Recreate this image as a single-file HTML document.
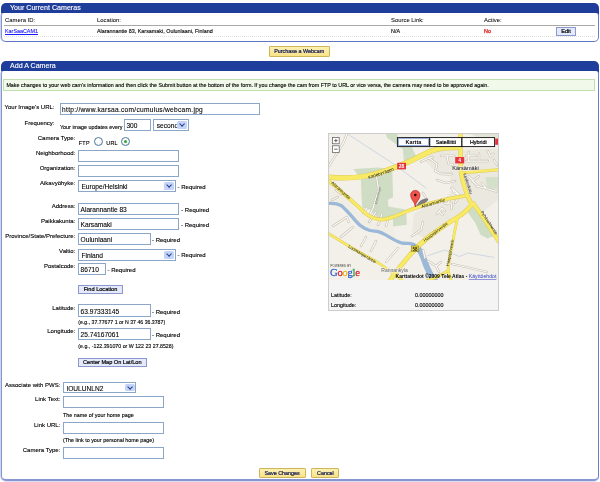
<!DOCTYPE html>
<html><head><meta charset="utf-8"><title>Webcam</title>
<style>
html,body{margin:0;padding:0;background:#fff;}
body{width:600px;height:482px;position:relative;overflow:hidden;will-change:transform;font-family:"Liberation Sans",sans-serif;font-size:5.4px;color:#000;line-height:1;-webkit-text-stroke:0.12px #000;}
.a{position:absolute;white-space:nowrap;}
.box{position:absolute;left:1px;width:598px;}
.box .hb{position:absolute;left:0;right:0;top:0;height:14px;background:#1f3d9b;border-radius:5px 5px 0 0;}
.box .in{position:absolute;left:0;right:0;bottom:0;box-sizing:border-box;background:#fff;border-left:1px solid #8595d1;border-right:1px solid #6a7ec8;border-bottom:1px solid #5f76c2;border-radius:3px 3px 5px 5px;box-shadow:-1px 0 0 #cfd5ec;}
.hd{position:absolute;left:9px;top:2.3px;color:#fff;font-size:7.1px;white-space:nowrap;-webkit-text-stroke:0.12px #fff;}
.lbl{position:absolute;white-space:nowrap;text-align:right;width:110px;color:#000;font-size:6px;}
.inp{position:absolute;background:#fff;border:1px solid #8ba6c6;box-sizing:border-box;height:12px;font-size:6.6px;line-height:9.4px;padding-left:1.6px;padding-top:1.2px;white-space:nowrap;overflow:hidden;-webkit-text-stroke:0.1px #000;}
.sel{position:absolute;background:#fff;border:1px solid #8ba6c6;box-sizing:border-box;height:12px;font-size:6.6px;line-height:9.4px;padding-left:2.4px;padding-top:.8px;white-space:nowrap;overflow:hidden;-webkit-text-stroke:0.1px #000;}
.sel i{position:absolute;right:0.8px;top:1px;width:9.6px;height:8px;background:#c3d3fa;border-radius:1.5px;}
.sel i:after{content:"";position:absolute;left:2.5px;top:.7px;width:3.2px;height:3.2px;border-right:1.5px solid #27407f;border-bottom:1.5px solid #27407f;transform:rotate(45deg);}
.req{position:absolute;white-space:nowrap;color:#000;font-size:6px;}
.hint{position:absolute;white-space:nowrap;color:#000;font-size:5.4px;}
.btn{position:absolute;box-sizing:border-box;border:1px solid #8c98cc;background:#e4eafb;text-align:center;white-space:nowrap;color:#000;font-size:5.6px;-webkit-text-stroke:0.2px #000;}
.ybtn{position:absolute;box-sizing:border-box;border:1px solid #cdb658;background:linear-gradient(#fcf0b4,#f8e388);text-align:center;white-space:nowrap;color:#141a55;font-size:5.4px;-webkit-text-stroke:0.22px #141a55;border-radius:1px;}
.radio{position:absolute;width:9px;height:9px;box-sizing:border-box;border:1.1px solid #4d78a6;border-radius:50%;background:radial-gradient(circle at 40% 35%,#fff 30%,#e4e4dc 100%);}
.radio span{position:absolute;left:2px;top:2px;width:3px;height:3px;border-radius:50%;background:#2fa62f;}
</style></head><body>

<!-- box 1 -->
<div class="box" style="top:3px;height:39px;"><div class="hb"></div><div class="in" style="top:9.8px;"></div><div class="hd">Your Current Cameras</div></div>
<div class="a" style="left:5px;top:18.2px;font-size:5.9px;-webkit-text-stroke:0.04px #000;">Camera ID:</div>
<div class="a" style="left:97px;top:18.2px;font-size:5.9px;-webkit-text-stroke:0.04px #000;">Location:</div>
<div class="a" style="left:391px;top:18.2px;font-size:5.9px;-webkit-text-stroke:0.04px #000;">Source Link:</div>
<div class="a" style="left:484px;top:18.2px;font-size:5.9px;-webkit-text-stroke:0.04px #000;">Active:</div>
<div class="a" style="left:4px;top:25px;width:591px;height:1px;background:#a8a8a4;"></div>
<div class="a" style="left:5px;top:28.6px;color:#1a1aff;text-decoration:underline;-webkit-text-stroke:0.12px #1a1aff;">KarSaaCAM1</div>
<div class="a" style="left:97px;top:28.6px;">Alarannantie 83, Karsamaki, Oulunlaani, Finland</div>
<div class="a" style="left:391px;top:28.6px;">N/A</div>
<div class="a" style="left:484px;top:28.6px;color:#e01010;-webkit-text-stroke:0.25px #e01010;">No</div>
<div class="btn" style="left:556px;top:27px;width:20px;height:8.5px;line-height:6.5px;">Edit</div>
<div class="a" style="left:4px;top:36px;width:591px;height:0;border-top:1px dotted #e0e0e0;"></div>

<div class="ybtn" style="left:268.6px;top:46px;width:61.2px;height:10.6px;line-height:8.6px;">Purchase a Webcam</div>

<!-- box 2 -->
<div class="box" style="top:61px;height:420px;"><div class="hb"></div><div class="in" style="top:9.8px;border-bottom:2px solid #8796d2;box-shadow:-1px 0 0 #cfd5ec,0 1px 0 #d9def2;"></div><div class="hd">Add A Camera</div></div>
<div class="a" style="left:3.4px;top:79px;width:591.4px;height:11.6px;box-sizing:border-box;border:1px solid #bfdfae;background:#f1f9ea;line-height:10.8px;padding-left:2px;font-size:5.36px;">Make changes to your web cam's information and then click the Submit button at the bottom of the form. If you change the cam from FTP to URL or vice versa, the camera may need to be approved again.</div>


<!-- form -->
<div class="lbl" style="left:-55.5px;top:104.3px;">Your Image's URL:</div>
<div class="inp" style="left:59.5px;top:103.2px;width:200.0px;letter-spacing:.28px;">http://www.karsaa.com/cumulus/webcam.jpg</div>
<div class="lbl" style="left:-55.5px;top:119.8px;">Frequency:</div>
<div class="hint" style="left:60.0px;top:124.5px;">Your image updates every</div>
<div class="inp" style="left:123.8px;top:119.0px;width:27.6px;height:12.4px;">300</div>
<div class="sel" style="left:153.4px;top:119.4px;width:35.3px;height:11.4px;line-height:9px;">seconds<i style="height:7.4px;"></i></div>
<div class="lbl" style="left:-34.7px;top:134.8px;">Camera Type:</div>
<div class="hint" style="left:78.8px;top:141px;letter-spacing:.25px;">FTP</div>
<div class="radio" style="left:93.5px;top:137.2px;"></div>
<div class="hint" style="left:106.3px;top:141px;letter-spacing:.25px;">URL</div>
<div class="radio" style="left:121px;top:137.2px;"><span></span></div>
<div class="lbl" style="left:-34.7px;top:150.1px;">Neighborhood:</div>
<div class="inp" style="left:78.0px;top:149.6px;width:101.0px;"></div>
<div class="lbl" style="left:-34.7px;top:165.1px;">Organization:</div>
<div class="inp" style="left:78.0px;top:164.8px;width:101.0px;"></div>
<div class="lbl" style="left:-34.7px;top:180.1px;">Aikavyöhyke:</div>
<div class="sel" style="left:78.0px;top:180.0px;width:97.6px;">Europe/Helsinki<i></i></div>
<div class="req" style="left:177.6px;top:183.8px;">- Required</div>
<div class="lbl" style="left:-34.7px;top:203.1px;">Address:</div>
<div class="inp" style="left:78.0px;top:203.0px;width:101.0px;">Alarannantie 83</div>
<div class="req" style="left:181.2px;top:206.6px;">- Required</div>
<div class="lbl" style="left:-34.7px;top:218.1px;">Paikkakunta:</div>
<div class="inp" style="left:78.0px;top:218.0px;width:101.0px;">Karsamaki</div>
<div class="req" style="left:181.0px;top:222.3px;">- Required</div>
<div class="lbl" style="left:-34.7px;top:233.1px;">Province/State/Prefecture:</div>
<div class="inp" style="left:78.0px;top:233.0px;width:72.8px;">Oulunlaani</div>
<div class="req" style="left:152.0px;top:237.3px;">- Required</div>
<div class="lbl" style="left:-34.7px;top:248.1px;">Valtio:</div>
<div class="sel" style="left:78.0px;top:249.0px;width:97.6px;">Finland<i></i></div>
<div class="req" style="left:177.6px;top:252.1px;">- Required</div>
<div class="lbl" style="left:-34.7px;top:263.3px;">Postalcode:</div>
<div class="inp" style="left:78.0px;top:263.0px;width:28.0px;">86710</div>
<div class="req" style="left:107.5px;top:266.8px;">- Required</div>
<div class="btn" style="left:78px;top:285px;width:45px;height:9.4px;line-height:7.4px;">Find Location</div>
<div class="lbl" style="left:-34.7px;top:304.8px;">Latitude:</div>
<div class="inp" style="left:78.0px;top:304.4px;width:73.0px;height:12.6px;">63.97333145</div>
<div class="req" style="left:152.0px;top:308.8px;">- Required</div>
<div class="hint" style="left:78.3px;top:320.2px;font-size:5.2px;">(e.g., 37.77677 1 or N 37 46 36.3787)</div>
<div class="lbl" style="left:-34.7px;top:328.3px;">Longitude:</div>
<div class="inp" style="left:78.0px;top:328.0px;width:73.0px;">25.74167061</div>
<div class="req" style="left:152.0px;top:332.3px;">- Required</div>
<div class="hint" style="left:78.3px;top:343.8px;font-size:5.25px;">(e.g., -122.391070 or W 122 23 27.8528)</div>
<div class="btn" style="left:78px;top:357.6px;width:68.6px;height:9.4px;line-height:7.4px;">Center Map On Lat/Lon</div>
<div class="lbl" style="left:-49.7px;top:382.3px;">Associate with PWS:</div>
<div class="sel" style="left:63px;top:382.4px;width:73.4px;height:11px;line-height:9px;">IOULUNLN2<i style="height:7px;"></i></div>
<div class="lbl" style="left:-49.7px;top:396.2px;">Link Text:</div>
<div class="inp" style="left:63.0px;top:396.0px;width:100.6px;"></div>
<div class="hint" style="left:63.0px;top:412.6px;">The name of your home page</div>
<div class="lbl" style="left:-49.7px;top:422.4px;">Link URL:</div>
<div class="inp" style="left:63.0px;top:422.0px;width:100.6px;"></div>
<div class="hint" style="left:63.0px;top:438.2px;">(The link to your personal home page)</div>
<div class="lbl" style="left:-49.7px;top:447.4px;">Camera Type:</div>
<div class="inp" style="left:63.0px;top:447.2px;width:100.6px;"></div>

<div class="ybtn" style="left:258.6px;top:467.6px;width:47px;height:10px;line-height:8px;">Save Changes</div>
<div class="ybtn" style="left:311.4px;top:467.6px;width:28px;height:10px;line-height:8px;">Cancel</div>

<!-- map panel -->
<div class="a" style="left:328px;top:133px;width:171.3px;height:178px;box-sizing:border-box;border:1px solid #ccc;background:#f4f4f4;"></div>
<div class="a" style="left:331px;top:293.3px;">Latitude:</div>
<div class="a" style="left:415px;top:293.3px;">0.00000000</div>
<div class="a" style="left:331px;top:302.8px;">Longitude:</div>
<div class="a" style="left:415px;top:302.8px;">0.00000000</div>

<svg class="a" style="left:329px;top:134px;" width="169" height="146" viewBox="329 134 169 146" font-family="Liberation Sans, sans-serif">
<rect x="329" y="134" width="169" height="146" fill="#f3f0e9"/>
<path d="M424,160 L436,150 L498,149 L498,200 L480,214 L474,208 L462,216 L440,228 L424,238 L412,232 L414,214 L430,204 L446,198 L452,190 L450,177 L436,172 Z" fill="#ebe8df"/>
<path d="M329,183 L346,196 L358,212 L372,222 L392,222 L396,238 L380,234 L362,226 L348,212 L340,204 L329,203 Z" fill="#f0ede5"/>
<g fill="#cfddc4">
<path d="M386,134 L397.2,134 L398,139.6 L403.7,142.4 L411,145.2 L416.8,157.6 L404,162 L402.8,149 L392.5,141.5 L387,137.7 Z"/>
<path d="M353.3,169.1 L378.2,167.5 L392.3,169.6 L393.1,197.3 L387.8,199.8 L388.5,206.5 L399.8,208.5 L406.4,209.8 L406.7,224.7 L393.1,226.4 L392.8,217.3 L384.8,218.9 L378.2,218.1 L369.9,209.8 L362.4,208.1 L361.6,198.2 L360.8,179.1 Z"/>
<path d="M466.5,210.6 L472,206.6 L481,214.5 L494,231.5 L494,236 L487.6,238.5 L480.6,235 L475.3,223 Z"/>
<path d="M485.5,177 L498,177 L498,189 L487,188.5 Z" opacity=".8"/>
<path d="M470,134 L498,134 L498,141 L482,139.5 Z" opacity=".55"/>
</g>
<g fill="none" stroke="#9cb8d8" stroke-linecap="round" stroke-linejoin="round">
<path d="M327,203.6 C332,203 337,203.4 341,205.4 C345,208.4 348.6,213 353.3,218.1 C356,221.4 358.6,224.4 361.6,226.4 C364.4,228.6 367,229.8 369.9,230.5 C373,231.2 375.6,231 378.2,231.6 C382,232.6 385,234.6 388.2,236.3 C392,238.6 396,241 401,242.8 C405,243.6 408,243.2 411,243.6 C415,244.4 418.6,247.6 421,251.4 C424.4,256.6 425.5,263 428,268 C430.5,273.5 434,278 437.5,282" stroke-width="3.3"/>
<path d="M419,249.5 C423,254.5 424.4,261 426.6,266.5 L432.5,279" stroke-width="6"/>
<path d="M347.7,134 L390.6,162 L414,179 L426,188" stroke-width=".6" stroke="#b3c6db"/>
<path d="M428,255.6 L445,250 L459.4,256.5 L468,253 L494,257.4" stroke-width=".6" stroke="#b3c6db"/>
<path d="M329,164 L334,158" stroke-width=".6" stroke="#b3c6db"/>
</g>
<path d="M346.7,134 C345,142 340,149 335,156 L329,166 M376.6,177 L378.5,190 L373,208 L369,216 M333,226 L347,217 L348.5,222 M341,237 L353,227 M361,246 L366,237 M371,251 L376,241 M386,262 L398,248 M363,213 L367,208 M369,222 L376,212 M378,225 L382,214 M386,226 L389,217 M336,190 L341,194 M332,200 L338,197 M412,236 L421,230 L423,222 M423,250 L425,258 M428,261 L436,266 L441,262 M436,266 L439,272 M452,264 L470,268 L487,272 M437,214 L442,208 L445,211 M447,204 L450,200 M455,203 L458,198 M421,161.7 L429,158 L432.5,157.3 M429,158 L436.9,163.9 L435.4,171.1 L441.2,174 L451.4,174 M441.2,155.9 L454.3,155.9 M447,155.9 L448.5,163.9 L452.8,164.6 M437,180 L446,183 L455,181 M466,155.9 L476,155.9 M468.8,152.3 L468.8,161 M479,153.7 L479,159.5 M466,161 L487.7,161 M487.7,150.8 L490.6,156.6 L493.5,153.7 M494,160 L497,165 M468.8,176 L477.5,186.4 L486.2,188.5 L496.4,191.4 M481.9,183.5 L486.2,188.5 M472,181 L478.9,176.2 M452.1,188 L454.3,193 L459,195 M451.4,187.8 L458.6,194.3 M444,203.1 L451.4,203.1 L451.4,208.9 M439.8,211.8 L442.7,215 M423,193 L426,198 " fill="none" stroke="#c2bcaf" stroke-width="2.3" stroke-linecap="round" stroke-linejoin="round"/>
<path d="M346.7,134 C345,142 340,149 335,156 L329,166 M376.6,177 L378.5,190 L373,208 L369,216 M333,226 L347,217 L348.5,222 M341,237 L353,227 M361,246 L366,237 M371,251 L376,241 M386,262 L398,248 M363,213 L367,208 M369,222 L376,212 M378,225 L382,214 M386,226 L389,217 M336,190 L341,194 M332,200 L338,197 M412,236 L421,230 L423,222 M423,250 L425,258 M428,261 L436,266 L441,262 M436,266 L439,272 M452,264 L470,268 L487,272 M437,214 L442,208 L445,211 M447,204 L450,200 M455,203 L458,198 M421,161.7 L429,158 L432.5,157.3 M429,158 L436.9,163.9 L435.4,171.1 L441.2,174 L451.4,174 M441.2,155.9 L454.3,155.9 M447,155.9 L448.5,163.9 L452.8,164.6 M437,180 L446,183 L455,181 M466,155.9 L476,155.9 M468.8,152.3 L468.8,161 M479,153.7 L479,159.5 M466,161 L487.7,161 M487.7,150.8 L490.6,156.6 L493.5,153.7 M494,160 L497,165 M468.8,176 L477.5,186.4 L486.2,188.5 L496.4,191.4 M481.9,183.5 L486.2,188.5 M472,181 L478.9,176.2 M452.1,188 L454.3,193 L459,195 M451.4,187.8 L458.6,194.3 M444,203.1 L451.4,203.1 L451.4,208.9 M439.8,211.8 L442.7,215 M423,193 L426,198 " fill="none" stroke="#fbfaf5" stroke-width="1.25" stroke-linecap="round" stroke-linejoin="round"/>
<g fill="none" stroke="#dcc856" stroke-linecap="round" stroke-linejoin="round">
<path d="M327,177 C340,178.6 354,178 366,176 C380,173.3 394,168 406,163 C416,158.7 424,154 432,150.8 C440,148 450,147.4 459,147.4" stroke-width="5.3"/>
<path d="M460.5,132 L460.5,160 L461,172 C462,180 465,189 468,197 L472,205" stroke-width="4.3"/>
<path d="M327,180.4 C334,184.5 340,189.6 345,194.9 C350,198.6 356,204.5 361.6,209.8 C365,213.5 368,215.6 371.6,217.3 C375,218.8 378,219.6 381.5,219.6 C386,219.4 390,218 394.8,216.4 C401,214 406,211.6 411.4,209.6 C418,207 424,205 430,203.4 C440,200.6 452,197.6 468,195.4" stroke-width="3.7"/>
<path d="M472,204 C467,211 461,215.5 455,219 C446,224 438,230 430,236 C422,242 415,249 409,256 C402,264 395,273 389,282" stroke-width="4.7"/>
<path d="M473,203 C479,211 486,221.5 492,231 L500,243" stroke-width="4.3"/>
<path d="M327,232.6 C336,238 344,243 352,248 C362,254 372,258.5 380,264 C388,269.5 396,275 403,281" stroke-width="2.7"/>
<path d="M457.5,218 C455.5,227 453.5,237 452,246 C450.5,254 448.4,262 448.2,269 C448.4,274 450,278 452,282" stroke-width="2.7"/>
<path d="M462,173 C470,172 480,171.2 490,170.4 L500,169.6" stroke-width="3.0"/>
<path d="M424,282 L436,277.5 L448.5,270.5" stroke-width="2.7"/>
</g>
<g fill="none" stroke="#f8ea64" stroke-linecap="round" stroke-linejoin="round">
<path d="M327,177 C340,178.6 354,178 366,176 C380,173.3 394,168 406,163 C416,158.7 424,154 432,150.8 C440,148 450,147.4 459,147.4" stroke-width="4.4"/>
<path d="M460.5,132 L460.5,160 L461,172 C462,180 465,189 468,197 L472,205" stroke-width="3.4"/>
<path d="M327,180.4 C334,184.5 340,189.6 345,194.9 C350,198.6 356,204.5 361.6,209.8 C365,213.5 368,215.6 371.6,217.3 C375,218.8 378,219.6 381.5,219.6 C386,219.4 390,218 394.8,216.4 C401,214 406,211.6 411.4,209.6 C418,207 424,205 430,203.4 C440,200.6 452,197.6 468,195.4" stroke-width="2.9"/>
<path d="M472,204 C467,211 461,215.5 455,219 C446,224 438,230 430,236 C422,242 415,249 409,256 C402,264 395,273 389,282" stroke-width="3.8"/>
<path d="M473,203 C479,211 486,221.5 492,231 L500,243" stroke-width="3.4"/>
<path d="M327,232.6 C336,238 344,243 352,248 C362,254 372,258.5 380,264 C388,269.5 396,275 403,281" stroke-width="2.0"/>
<path d="M457.5,218 C455.5,227 453.5,237 452,246 C450.5,254 448.4,262 448.2,269 C448.4,274 450,278 452,282" stroke-width="2.0"/>
<path d="M462,173 C470,172 480,171.2 490,170.4 L500,169.6" stroke-width="2.3"/>
<path d="M424,282 L436,277.5 L448.5,270.5" stroke-width="2.0"/>
</g>
<g font-size="4.4" fill="#222" text-anchor="middle">
<text x="381.5" y="174.6" transform="rotate(-19 381.5 174.6)">Karlebyvägen</text>
<text x="340" y="191.5" transform="rotate(42 340 191.5)">Alarannantie</text>
<text x="433.5" y="204.6" transform="rotate(-17 433.5 204.6)">Alarannantie</text>
<text x="361.5" y="255.4" transform="rotate(31 361.5 255.4)">Luomanperäntie</text>
<text x="436.5" y="233" transform="rotate(-37 436.5 233)">Haapajärventie</text>
<text x="451.3" y="253" transform="rotate(-79 451.3 253)" font-size="4">Haapajärventie</text>
<text x="466.6" y="184" transform="rotate(72 466.6 184)" font-size="4.2">Keskuskatu</text>
<text x="488" y="223.5" transform="rotate(57 488 223.5)" font-size="4.2">Pyhäsalmentie</text>
</g>
<g font-size="3.6" fill="#777" text-anchor="middle">
<text x="379" y="196" transform="rotate(-76 379 196)">Museokuja</text>
</g>
<text x="465.5" y="169.8" font-size="5.6" fill="#000" text-anchor="middle" stroke="#f6f4ee" stroke-width=".9" paint-order="stroke" stroke-linejoin="round">Kärsämäki</text>
<text x="394.5" y="272.2" font-size="5" fill="#666" text-anchor="middle" stroke="#f3f0e9" stroke-width="1.2" paint-order="stroke" stroke-linejoin="round">Rannankyla</text>
<rect x="397.2" y="162.8" width="8.8" height="6.6" fill="#e8333f"/><text x="401.6" y="168" font-size="5" font-weight="bold" fill="#fff" text-anchor="middle">28</text>
<rect x="455.2" y="157" width="9" height="6.4" fill="#e8333f"/><text x="459.7" y="162.2" font-size="5" font-weight="bold" fill="#fff" text-anchor="middle">4</text>
<rect x="495.2" y="138.6" width="4" height="6.2" fill="#e8333f"/>
<rect x="411.2" y="246" width="7.6" height="5.4" fill="#f8e24a" stroke="#6b5d14" stroke-width=".5"/><text x="415" y="250.6" font-size="4.6" font-weight="bold" fill="#111" text-anchor="middle">58</text>
<path d="M415.6,206.8 L419,202 C421,199.6 425,198 428,198.6 C429,200.4 426,203 422,204 Z" fill="#555" opacity=".75"/>
<path d="M415.3,207 C415,201.5 410.6,199.6 410.6,195.2 C410.6,192.4 412.7,190.4 415.3,190.4 C417.9,190.4 420,192.4 420,195.2 C420,199.6 415.6,201.5 415.3,207 Z" fill="#f0524a" stroke="#a8201c" stroke-width=".6"/>
<circle cx="415.3" cy="195" r="1.25" fill="#1a0a0a"/>
<g fill="#fff" stroke="#555" stroke-width=".7"><rect x="332.6" y="137.4" width="6.6" height="6.4"/><rect x="332.6" y="145.8" width="6.6" height="6.8"/></g>
<path d="M334.2,140.6 H337.6 M335.9,138.9 V142.3 M334.2,149.2 H337.6" stroke="#444" stroke-width=".8" fill="none"/>
<g fill="#fff" stroke="#111" stroke-width=".9"><rect x="397.4" y="137.6" width="32" height="9"/><rect x="429.8" y="137.6" width="32" height="9"/><rect x="462" y="137.6" width="32.6" height="9"/></g>
<rect x="398.5" y="138.7" width="29.8" height="6.8" fill="none" stroke="#6b8fd0" stroke-width=".7"/>
<g font-size="5.4" fill="#000" text-anchor="middle"><text x="413.4" y="144.2" font-weight="bold">Kartta</text><text x="445.8" y="144.2" stroke="#000" stroke-width=".18">Satelliitti</text><text x="478.3" y="144.2" stroke="#000" stroke-width=".18">Hybridi</text></g>
<text x="330.6" y="266.6" font-size="2.9" fill="#333" letter-spacing=".1">POWERED BY</text>
<text x="330" y="276.4" font-family="Liberation Serif, serif" font-size="10.7" letter-spacing="-.3" stroke="#fff" stroke-width="1.3" stroke-linejoin="round" fill="#fff" opacity=".85">Google</text>
<text x="330" y="276.4" font-family="Liberation Serif, serif" font-size="10.7" letter-spacing="-.3" stroke-width=".28"><tspan fill="#2a57c8" stroke="#2a57c8">G</tspan><tspan fill="#d8252c" stroke="#d8252c">o</tspan><tspan fill="#e8b414" stroke="#e8b414">o</tspan><tspan fill="#2a57c8" stroke="#2a57c8">g</tspan><tspan fill="#1f9c3c" stroke="#1f9c3c">l</tspan><tspan fill="#d8252c" stroke="#d8252c">e</tspan></text>
<text x="395.6" y="278" font-size="5" fill="#000"><tspan font-weight="bold">Karttatiedot ©2009 Tele Atlas - </tspan><tspan fill="#3344cc" text-decoration="underline" font-size="5.2">Käyttöehdot</tspan></text>
</svg>

</body></html>
